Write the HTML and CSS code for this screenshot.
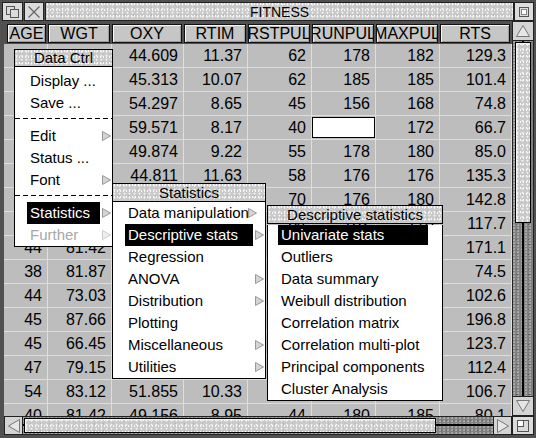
FILE: index.html
```html
<!DOCTYPE html>
<html>
<head>
<meta charset="utf-8">
<link rel="stylesheet" href="styles.css">
</head>
<body>
<div class="window">
  <div class="titlebar">
    <div class="tool back"><svg width="16" height="14" viewBox="0 0 16 14"><rect x="1.5" y="1.5" width="8" height="8" fill="none" stroke="#555"/><rect x="5.5" y="4.5" width="8" height="8" fill="#dcdcdc" stroke="#555"/></svg></div>
    <div class="tool close"><svg width="14" height="14" viewBox="0 0 14 14"><path d="M1.5 1.5 L12.5 12.5 M12.5 1.5 L1.5 12.5" stroke="#666" stroke-width="1.2"/></svg></div>
    <div class="title stone">FITNESS</div>
    <div class="tool toggle"><svg width="12" height="12" viewBox="0 0 12 12"><rect x="1.5" y="1.5" width="9" height="9" fill="none" stroke="#555"/><rect x="3.5" y="3.5" width="5" height="5" fill="#fff" stroke="#888"/></svg></div>
  </div>
  <div class="main">
    <div class="sheet">
      <div class="hrow">
        <div class="hcell first"><span>AGE</span></div>
        <div class="hcell"><span>WGT</span></div>
        <div class="hcell"><span>OXY</span></div>
        <div class="hcell"><span>RTIM</span></div>
        <div class="hcell"><span>RSTPUL</span></div>
        <div class="hcell"><span>RUNPUL</span></div>
        <div class="hcell"><span>MAXPUL</span></div>
        <div class="hcell"><span>RTS</span></div>
      </div>
      <div class="row"><div class="cell">44</div><div class="cell">89.47</div><div class="cell">44.609</div><div class="cell">11.37</div><div class="cell">62</div><div class="cell">178</div><div class="cell">182</div><div class="cell">129.3</div></div>
      <div class="row"><div class="cell">40</div><div class="cell">75.07</div><div class="cell">45.313</div><div class="cell">10.07</div><div class="cell">62</div><div class="cell">185</div><div class="cell">185</div><div class="cell">101.4</div></div>
      <div class="row"><div class="cell">44</div><div class="cell">85.84</div><div class="cell">54.297</div><div class="cell">8.65</div><div class="cell">45</div><div class="cell">156</div><div class="cell">168</div><div class="cell">74.8</div></div>
      <div class="row"><div class="cell">42</div><div class="cell">68.15</div><div class="cell">59.571</div><div class="cell">8.17</div><div class="cell">40</div><div class="cell edit"><div class="editbox"></div></div><div class="cell">172</div><div class="cell">66.7</div></div>
      <div class="row"><div class="cell">38</div><div class="cell">89.02</div><div class="cell">49.874</div><div class="cell">9.22</div><div class="cell">55</div><div class="cell">178</div><div class="cell">180</div><div class="cell">85.0</div></div>
      <div class="row"><div class="cell">47</div><div class="cell">77.45</div><div class="cell">44.811</div><div class="cell">11.63</div><div class="cell">58</div><div class="cell">176</div><div class="cell">176</div><div class="cell">135.3</div></div>
      <div class="row"><div class="cell">40</div><div class="cell">75.98</div><div class="cell">45.681</div><div class="cell">11.95</div><div class="cell">70</div><div class="cell">176</div><div class="cell">180</div><div class="cell">142.8</div></div>
      <div class="row"><div class="cell">43</div><div class="cell">81.19</div><div class="cell">49.091</div><div class="cell">10.85</div><div class="cell">64</div><div class="cell">162</div><div class="cell">170</div><div class="cell">117.7</div></div>
      <div class="row"><div class="cell">44</div><div class="cell">81.42</div><div class="cell">39.442</div><div class="cell">13.08</div><div class="cell">63</div><div class="cell">174</div><div class="cell">176</div><div class="cell">171.1</div></div>
      <div class="row"><div class="cell">38</div><div class="cell">81.87</div><div class="cell">60.055</div><div class="cell">8.63</div><div class="cell">48</div><div class="cell">170</div><div class="cell">186</div><div class="cell">74.5</div></div>
      <div class="row"><div class="cell">44</div><div class="cell">73.03</div><div class="cell">50.541</div><div class="cell">10.13</div><div class="cell">45</div><div class="cell">168</div><div class="cell">168</div><div class="cell">102.6</div></div>
      <div class="row"><div class="cell">45</div><div class="cell">87.66</div><div class="cell">37.388</div><div class="cell">14.03</div><div class="cell">56</div><div class="cell">186</div><div class="cell">192</div><div class="cell">196.8</div></div>
      <div class="row"><div class="cell">45</div><div class="cell">66.45</div><div class="cell">44.754</div><div class="cell">11.12</div><div class="cell">51</div><div class="cell">176</div><div class="cell">176</div><div class="cell">123.7</div></div>
      <div class="row"><div class="cell">47</div><div class="cell">79.15</div><div class="cell">47.273</div><div class="cell">10.60</div><div class="cell">47</div><div class="cell">162</div><div class="cell">164</div><div class="cell">112.4</div></div>
      <div class="row"><div class="cell">54</div><div class="cell">83.12</div><div class="cell">51.855</div><div class="cell">10.33</div><div class="cell">50</div><div class="cell">166</div><div class="cell">170</div><div class="cell">106.7</div></div>
      <div class="row"><div class="cell">40</div><div class="cell">81.42</div><div class="cell">49.156</div><div class="cell">8.95</div><div class="cell">44</div><div class="cell">180</div><div class="cell">185</div><div class="cell">80.1</div></div>
    </div>
    <div class="vscroll">
      <div class="arrowbox"><svg width="16" height="14" viewBox="0 0 16 14"><path d="M8 1.5 L14.5 12.5 L1.5 12.5 Z" fill="#e6e6e6" stroke="#777"/></svg></div>
      <div class="well vwell"><div class="vthumb stone"></div></div>
      <div class="arrowbox"><svg width="16" height="14" viewBox="0 0 16 14"><path d="M1.5 1.5 L14.5 1.5 L8 12.5 Z" fill="#e6e6e6" stroke="#777"/></svg></div>
    </div>
  </div>
  <div class="bottom">
    <div class="hscroll">
      <div class="arrowbox h"><svg width="14" height="16" viewBox="0 0 14 16"><path d="M1.5 8 L12.5 1.5 L12.5 14.5 Z" fill="#e6e6e6" stroke="#777"/></svg></div>
      <div class="well hwell"><div class="hthumb stone"></div></div>
      <div class="arrowbox h"><svg width="14" height="16" viewBox="0 0 14 16"><path d="M12.5 8 L1.5 1.5 L1.5 14.5 Z" fill="#e6e6e6" stroke="#777"/></svg></div>
    </div>
    <div class="tool corner"><svg width="14" height="14" viewBox="0 0 14 14"><rect x="1.5" y="1.5" width="11" height="11" fill="none" stroke="#555"/><rect x="1.5" y="1.5" width="6" height="6" fill="#fff" stroke="#555"/></svg></div>
  </div>

  <div class="menu m1">
    <div class="mtitle stone">Data Ctrl</div>
    <div class="mbody pad">
      <div class="item">Display ...</div>
      <div class="item">Save ...</div>
      <div class="sep s1"></div>
      <div class="item">Edit<span class="sub"><svg width="9" height="10" viewBox="0 0 9 10"><path d="M0.5 0.5 L8.5 5 L0.5 9.5 Z" fill="#d4d4d4" stroke="#999"/></svg></span></div>
      <div class="item">Status ...</div>
      <div class="item">Font<span class="sub"><svg width="9" height="10" viewBox="0 0 9 10"><path d="M0.5 0.5 L8.5 5 L0.5 9.5 Z" fill="#d4d4d4" stroke="#999"/></svg></span></div>
      <div class="sep s2"></div>
      <div class="item sel">Statistics<span class="sub"><svg width="9" height="10" viewBox="0 0 9 10"><path d="M0.5 0.5 L8.5 5 L0.5 9.5 Z" fill="#d4d4d4" stroke="#999"/></svg></span></div>
      <div class="item off">Further<span class="sub"><svg width="9" height="10" viewBox="0 0 9 10"><path d="M0.5 0.5 L8.5 5 L0.5 9.5 Z" fill="#eee" stroke="#ccc"/></svg></span></div>
    </div>
  </div>

  <div class="menu m2">
    <div class="mtitle stone">Statistics</div>
    <div class="mbody">
      <div class="item">Data manipulation<span class="sub near"><svg width="9" height="10" viewBox="0 0 9 10"><path d="M0.5 0.5 L8.5 5 L0.5 9.5 Z" fill="#d4d4d4" stroke="#999"/></svg></span></div>
      <div class="item sel">Descriptive stats<span class="sub"><svg width="9" height="10" viewBox="0 0 9 10"><path d="M0.5 0.5 L8.5 5 L0.5 9.5 Z" fill="#d4d4d4" stroke="#999"/></svg></span></div>
      <div class="item">Regression</div>
      <div class="item">ANOVA<span class="sub"><svg width="9" height="10" viewBox="0 0 9 10"><path d="M0.5 0.5 L8.5 5 L0.5 9.5 Z" fill="#d4d4d4" stroke="#999"/></svg></span></div>
      <div class="item">Distribution<span class="sub"><svg width="9" height="10" viewBox="0 0 9 10"><path d="M0.5 0.5 L8.5 5 L0.5 9.5 Z" fill="#d4d4d4" stroke="#999"/></svg></span></div>
      <div class="item">Plotting</div>
      <div class="item">Miscellaneous<span class="sub"><svg width="9" height="10" viewBox="0 0 9 10"><path d="M0.5 0.5 L8.5 5 L0.5 9.5 Z" fill="#d4d4d4" stroke="#999"/></svg></span></div>
      <div class="item">Utilities<span class="sub"><svg width="9" height="10" viewBox="0 0 9 10"><path d="M0.5 0.5 L8.5 5 L0.5 9.5 Z" fill="#d4d4d4" stroke="#999"/></svg></span></div>
    </div>
  </div>

  <div class="menu m3">
    <div class="mtitle stone">Descriptive statistics</div>
    <div class="mbody">
      <div class="item sel">Univariate stats</div>
      <div class="item">Outliers</div>
      <div class="item">Data summary</div>
      <div class="item">Weibull distribution</div>
      <div class="item">Correlation matrix</div>
      <div class="item">Correlation multi-plot</div>
      <div class="item">Principal components</div>
      <div class="item">Cluster Analysis</div>
    </div>
  </div>
</div>
</body>
</html>
```

FILE: styles.css
```css
* { box-sizing: border-box; }

body {
  margin: 0;
  font-family: "Liberation Sans", Arial, sans-serif;
  color: #000;
}

.stone {
  background-color: #c9c9c9;
  background-image:
    radial-gradient(circle at 30% 40%, #f2f2f2 0 0.8px, transparent 1.2px),
    radial-gradient(circle at 70% 70%, #b4b4b4 0 0.6px, transparent 1px),
    radial-gradient(circle at 50% 20%, #fafafa 0 0.7px, transparent 1px);
  background-size: 5px 4px, 9px 7px, 3px 6px;
}

.window {
  position: relative;
  width: 536px;
  height: 438px;
  background: #505050;
  padding: 2px 2px 3px 2px;
  display: flex;
  flex-direction: column;
  overflow: hidden;
}

.titlebar {
  display: flex;
  height: 19px;
  flex: none;
}

.tool {
  width: 20px;
  flex: none;
  background: #dcdcdc;
  border: 1px solid #222;
  display: flex;
  align-items: center;
  justify-content: center;
}

.tool.back { width: 21px; }
.tool.close { margin-left: 1px; }
.tool.toggle { width: 20px; }

.title {
  flex: 1;
  border: 1px solid #222;
  margin: 0 0 0 1px;
  display: flex;
  align-items: center;
  justify-content: center;
  font-size: 14px;
}

.main {
  flex: 1;
  display: flex;
  min-height: 0;
}

.sheet {
  width: 508px;
  margin-left: 2px;
  overflow: hidden;
  background: #bdbdbd;
}

.hrow,
.row {
  display: grid;
  grid-template-columns: 44px 64px 72px 64px 64px 64px 64px 72px;
}

.hrow {
  height: 23px;
  background: #505050;
}

.hcell {
  margin: 3px 2px 1px 0;
  background: #c6c6c6;
  border: 1px solid #111;
  box-shadow: inset 1px 1px 0 #f6f6f6, inset -1px -1px 0 #9a9a9a;
  display: flex;
  justify-content: center;
  align-items: center;
  overflow: hidden;
  white-space: nowrap;
  font-size: 16px;
}

.hcell.first { margin-left: 3px; }

.row { height: 24px; }

.cell {
  border-right: 1px solid #dedede;
  border-bottom: 1px solid #dedede;
  text-align: right;
  padding-right: 5px;
  font-size: 16px;
  line-height: 23px;
  white-space: nowrap;
}

.cell.edit { padding: 1px 0 0 0; }

.editbox {
  height: 21px;
  background: #fff;
  border: 1px solid #000;
}

.vscroll {
  width: 22px;
  flex: none;
  display: flex;
  flex-direction: column;
}

.arrowbox {
  height: 20px;
  flex: none;
  background: #d4d4d4;
  border: 1px solid #222;
  display: flex;
  align-items: center;
  justify-content: center;
}

.arrowbox.h {
  height: auto;
  width: 19px;
}

.well {
  flex: 1;
  position: relative;
  background-color: #808080;
  background-image:
    radial-gradient(circle at 30% 40%, #aaaaaa 0 0.8px, transparent 1.2px),
    radial-gradient(circle at 70% 70%, #555555 0 0.6px, transparent 1px);
  background-size: 4px 3px, 6px 5px;
  border-left: 1px solid #222;
  border-right: 1px solid #222;
}

.vwell::before {
  content: "";
  position: absolute;
  left: 9px;
  top: 0;
  bottom: 0;
  width: 2px;
  background: #000;
}

.vthumb {
  position: relative;
  margin: 1px 2px 0 2px;
  height: 181px;
  border: 1px solid #000;
  box-shadow: inset 1px 1px 0 #f2f2f2;
}

.bottom {
  display: flex;
  height: 19px;
  flex: none;
}

.hscroll {
  width: 508px;
  margin-left: 2px;
  display: flex;
}

.hwell {
  border-left: none;
  border-right: none;
  border-top: 1px solid #222;
  border-bottom: 1px solid #222;
}

.hwell::before {
  content: "";
  position: absolute;
  left: 0;
  right: 0;
  top: 7px;
  height: 2px;
  background: #000;
}

.hthumb {
  position: relative;
  margin: 1px 0 0 1px;
  width: 412px;
  height: 15px;
  border: 1px solid #000;
  box-shadow: inset 1px 1px 0 #f2f2f2;
}

.tool.corner { width: 22px; }

/* Menus */
.menu {
  position: absolute;
  font-size: 15px;
}

.m1 { left: 14px; top: 49px; width: 99px; }
.m2 { left: 112px; top: 183px; width: 154px; }
.m3 { left: 267px; top: 205px; width: 176px; }

.mtitle {
  border: 1px solid #000;
  text-align: center;
  height: 19px;
  line-height: 17px;
  white-space: nowrap;
}

.m1 .mtitle { height: 18px; line-height: 16px; }

.mbody {
  background: #fff;
  border: 1px solid #000;
  border-top: none;
}

.mbody.pad { padding-top: 3px; }

.item {
  position: relative;
  height: 22px;
  line-height: 22px;
  margin: 0 12px;
  padding-left: 3px;
  white-space: nowrap;
}

.m3 .item { margin: 0 14px 0 10px; }

.item.sel {
  background: #000;
  color: #fff;
}

.m3 .item.sel { height: 20px; line-height: 20px; margin-top: 1px; margin-bottom: 1px; }

.item.off { color: #a8a8a8; }

.sub {
  position: absolute;
  right: -11px;
  top: 6px;
  width: 9px;
  height: 10px;
  display: block;
  line-height: 0;
}

.sub.near { right: -4px; }

.sep {
  height: 11px;
  position: relative;
}

.sep::before {
  content: "";
  position: absolute;
  left: 0;
  right: 0;
  top: 4px;
  height: 1px;
  background: repeating-linear-gradient(to right, #000 0 5px, transparent 5px 8px);
}
```
